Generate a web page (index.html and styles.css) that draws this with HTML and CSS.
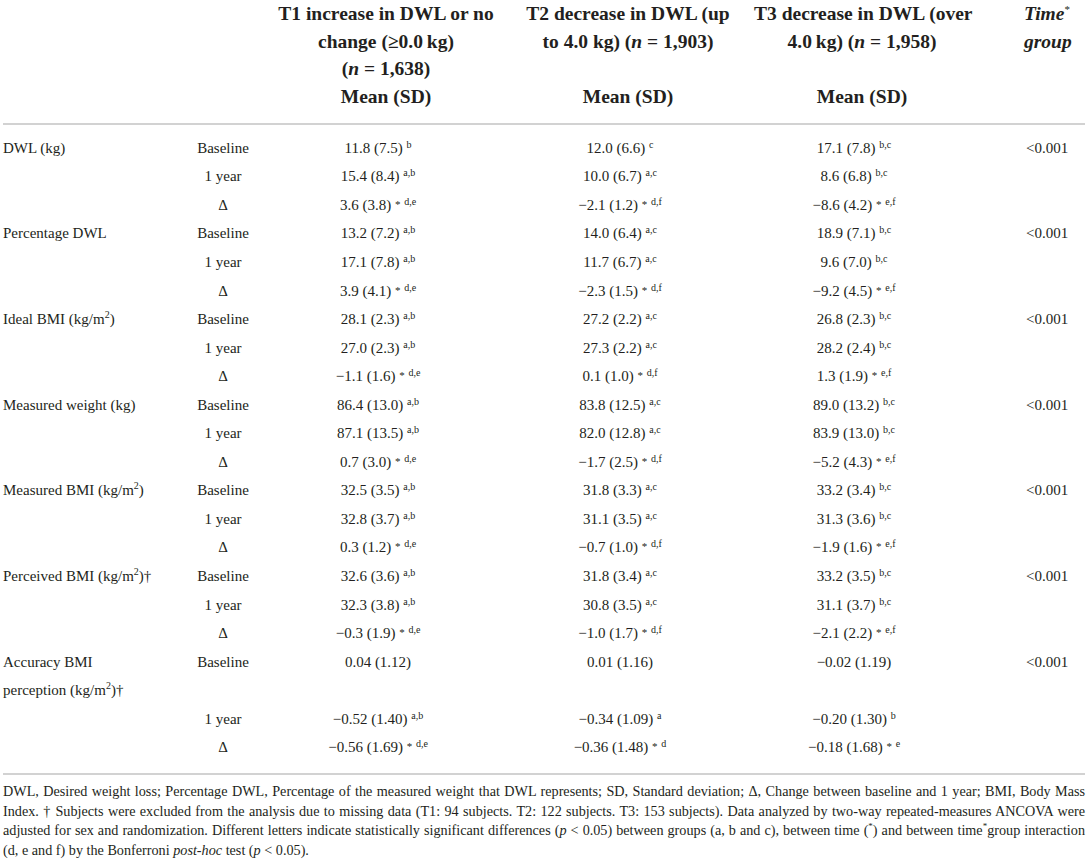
FILE: index.html
```html
<!DOCTYPE html>
<html lang="en">
<head>
<meta charset="utf-8">
<title>Table</title>
<link rel="stylesheet" href="styles.css">
</head>
<body>
<table class="data">
  <colgroup>
    <col class="c-label"><col class="c-time"><col class="c-t1"><col class="c-t2"><col class="c-t3"><col class="c-tg">
  </colgroup>
  <thead>
    <tr class="hrow1">
      <th></th>
      <th></th>
      <th class="hg">T1 increase in DWL or no<br>change (≥0.0&#8201;kg)<br>(<i>n</i> = 1,638)</th>
      <th class="hg">T2 decrease in DWL (up<br>to 4.0 kg) (<i>n</i> = 1,903)</th>
      <th class="hg">T3 decrease in DWL (over<br>4.0&#8201;kg) (<i>n</i> = 1,958)</th>
      <th class="htg" rowspan="2"><i>Time</i><sup class="hstar">*</sup><br><i>group</i></th>
    </tr>
    <tr class="hrow2">
      <th></th>
      <th></th>
      <th class="hg">Mean (SD)</th>
      <th class="hg">Mean (SD)</th>
      <th class="hg">Mean (SD)</th>
    </tr>
  </thead>
  <tbody>
    <tr><td class="lab">DWL (kg)</td><td class="tm">Baseline</td><td class="v">11.8 (7.5) <sup>b</sup></td><td class="v">12.0 (6.6) <sup>c</sup></td><td class="v">17.1 (7.8) <sup>b,c</sup></td><td class="p">&lt;0.001</td></tr>
    <tr><td class="lab"></td><td class="tm">1 year</td><td class="v">15.4 (8.4) <sup>a,b</sup></td><td class="v">10.0 (6.7) <sup>a,c</sup></td><td class="v">8.6 (6.8) <sup>b,c</sup></td><td class="p"></td></tr>
    <tr><td class="lab"></td><td class="tm">Δ</td><td class="v">3.6 (3.8) <span class="st">*</span> <sup>d,e</sup></td><td class="v">−2.1 (1.2) <span class="st">*</span> <sup>d,f</sup></td><td class="v">−8.6 (4.2) <span class="st">*</span> <sup>e,f</sup></td><td class="p"></td></tr>

    <tr><td class="lab">Percentage DWL</td><td class="tm">Baseline</td><td class="v">13.2 (7.2) <sup>a,b</sup></td><td class="v">14.0 (6.4) <sup>a,c</sup></td><td class="v">18.9 (7.1) <sup>b,c</sup></td><td class="p">&lt;0.001</td></tr>
    <tr><td class="lab"></td><td class="tm">1 year</td><td class="v">17.1 (7.8) <sup>a,b</sup></td><td class="v">11.7 (6.7) <sup>a,c</sup></td><td class="v">9.6 (7.0) <sup>b,c</sup></td><td class="p"></td></tr>
    <tr><td class="lab"></td><td class="tm">Δ</td><td class="v">3.9 (4.1) <span class="st">*</span> <sup>d,e</sup></td><td class="v">−2.3 (1.5) <span class="st">*</span> <sup>d,f</sup></td><td class="v">−9.2 (4.5) <span class="st">*</span> <sup>e,f</sup></td><td class="p"></td></tr>

    <tr><td class="lab">Ideal BMI (kg/m<sup class="u">2</sup>)</td><td class="tm">Baseline</td><td class="v">28.1 (2.3) <sup>a,b</sup></td><td class="v">27.2 (2.2) <sup>a,c</sup></td><td class="v">26.8 (2.3) <sup>b,c</sup></td><td class="p">&lt;0.001</td></tr>
    <tr><td class="lab"></td><td class="tm">1 year</td><td class="v">27.0 (2.3) <sup>a,b</sup></td><td class="v">27.3 (2.2) <sup>a,c</sup></td><td class="v">28.2 (2.4) <sup>b,c</sup></td><td class="p"></td></tr>
    <tr><td class="lab"></td><td class="tm">Δ</td><td class="v">−1.1 (1.6) <span class="st">*</span> <sup>d,e</sup></td><td class="v">0.1 (1.0) <span class="st">*</span> <sup>d,f</sup></td><td class="v">1.3 (1.9) <span class="st">*</span> <sup>e,f</sup></td><td class="p"></td></tr>

    <tr><td class="lab">Measured weight (kg)</td><td class="tm">Baseline</td><td class="v">86.4 (13.0) <sup>a,b</sup></td><td class="v">83.8 (12.5) <sup>a,c</sup></td><td class="v">89.0 (13.2) <sup>b,c</sup></td><td class="p">&lt;0.001</td></tr>
    <tr><td class="lab"></td><td class="tm">1 year</td><td class="v">87.1 (13.5) <sup>a,b</sup></td><td class="v">82.0 (12.8) <sup>a,c</sup></td><td class="v">83.9 (13.0) <sup>b,c</sup></td><td class="p"></td></tr>
    <tr><td class="lab"></td><td class="tm">Δ</td><td class="v">0.7 (3.0) <span class="st">*</span> <sup>d,e</sup></td><td class="v">−1.7 (2.5) <span class="st">*</span> <sup>d,f</sup></td><td class="v">−5.2 (4.3) <span class="st">*</span> <sup>e,f</sup></td><td class="p"></td></tr>

    <tr><td class="lab">Measured BMI (kg/m<sup class="u">2</sup>)</td><td class="tm">Baseline</td><td class="v">32.5 (3.5) <sup>a,b</sup></td><td class="v">31.8 (3.3) <sup>a,c</sup></td><td class="v">33.2 (3.4) <sup>b,c</sup></td><td class="p">&lt;0.001</td></tr>
    <tr><td class="lab"></td><td class="tm">1 year</td><td class="v">32.8 (3.7) <sup>a,b</sup></td><td class="v">31.1 (3.5) <sup>a,c</sup></td><td class="v">31.3 (3.6) <sup>b,c</sup></td><td class="p"></td></tr>
    <tr><td class="lab"></td><td class="tm">Δ</td><td class="v">0.3 (1.2) <span class="st">*</span> <sup>d,e</sup></td><td class="v">−0.7 (1.0) <span class="st">*</span> <sup>d,f</sup></td><td class="v">−1.9 (1.6) <span class="st">*</span> <sup>e,f</sup></td><td class="p"></td></tr>

    <tr><td class="lab">Perceived BMI (kg/m<sup class="u">2</sup>)†</td><td class="tm">Baseline</td><td class="v">32.6 (3.6) <sup>a,b</sup></td><td class="v">31.8 (3.4) <sup>a,c</sup></td><td class="v">33.2 (3.5) <sup>b,c</sup></td><td class="p">&lt;0.001</td></tr>
    <tr><td class="lab"></td><td class="tm">1 year</td><td class="v">32.3 (3.8) <sup>a,b</sup></td><td class="v">30.8 (3.5) <sup>a,c</sup></td><td class="v">31.1 (3.7) <sup>b,c</sup></td><td class="p"></td></tr>
    <tr><td class="lab"></td><td class="tm">Δ</td><td class="v">−0.3 (1.9) <span class="st">*</span> <sup>d,e</sup></td><td class="v">−1.0 (1.7) <span class="st">*</span> <sup>d,f</sup></td><td class="v">−2.1 (2.2) <span class="st">*</span> <sup>e,f</sup></td><td class="p"></td></tr>

    <tr><td class="lab">Accuracy BMI<br>perception (kg/m<sup class="u">2</sup>)†</td><td class="tm">Baseline</td><td class="v">0.04 (1.12)</td><td class="v">0.01 (1.16)</td><td class="v">−0.02 (1.19)</td><td class="p">&lt;0.001</td></tr>
    <tr><td class="lab"></td><td class="tm">1 year</td><td class="v">−0.52 (1.40) <sup>a,b</sup></td><td class="v">−0.34 (1.09) <sup>a</sup></td><td class="v">−0.20 (1.30) <sup>b</sup></td><td class="p"></td></tr>
    <tr><td class="lab"></td><td class="tm">Δ</td><td class="v">−0.56 (1.69) <span class="st">*</span> <sup>d,e</sup></td><td class="v">−0.36 (1.48) <span class="st">*</span> <sup>d</sup></td><td class="v">−0.18 (1.68) <span class="st">*</span> <sup>e</sup></td><td class="p"></td></tr>
  </tbody>
</table>
<p class="note">DWL, Desired weight loss; Percentage DWL, Percentage of the measured weight that DWL represents; SD, Standard deviation; Δ, Change between baseline and 1 year; BMI, Body Mass Index. † Subjects were excluded from the analysis due to missing data (T1: 94 subjects. T2: 122 subjects. T3: 153 subjects). Data analyzed by two-way repeated-measures ANCOVA were adjusted for sex and randomization. Different letters indicate statistically significant differences (<i>p</i> &lt; 0.05) between groups (a, b and c), between time (<sup class="nst">*</sup>) and between time<sup class="nst">*</sup>group interaction (d, e and f) by the Bonferroni <i>post-hoc</i> test (<i>p</i> &lt; 0.05).</p>
</body>
</html>
```

FILE: styles.css
```css
html, body {
  background: #ffffff;
}
body {
  margin: 0;
  padding: 0 4px 0 3px;
  font-family: "Liberation Serif", "Times New Roman", serif;
  color: #231f20;
}
.data {
  width: 100%;
  border-collapse: collapse;
  table-layout: fixed;
}
.c-label { width: 157px; }
.c-time { width: 110px; }
.c-t1 { width: 232px; }
.c-t2 { width: 252px; }
.c-t3 { width: 216px; }
.c-tg { width: auto; }

.data th, .data td {
  padding: 0;
}
.data thead {
  border-bottom: 2px solid #d2d2d2;
}
.data thead th {
  font-size: 19.5px;
  font-weight: bold;
  line-height: 27.7px;
  text-align: center;
  vertical-align: top;
  white-space: nowrap;
}
.hrow2 th {
  padding-bottom: 12px;
}
.data thead th.htg {
  text-align: left;
  padding-left: 54px;
}
.hstar {
  font-size: 11px;
  font-weight: normal;
  vertical-align: baseline;
  position: relative;
  top: -7px;
  line-height: 0;
}
.data tbody td {
  font-size: 15px;
  line-height: 28.55px;
  vertical-align: top;
  text-align: center;
  white-space: nowrap;
}
.data tbody tr:first-child td {
  padding-top: 9px;
}
.data tbody tr:last-child td {
  padding-bottom: 11px;
}
.data tbody {
  border-bottom: 2px solid #d2d2d2;
}
.data tbody td.lab {
  text-align: left;
}
.data tbody td.tm {
  padding-left: 16px;
}
.data tbody td.v {
  padding-right: 16px;
}
.data tbody td.p {
  text-align: left;
  padding-left: 56px;
}
sup {
  font-size: 10px;
  line-height: 0;
  vertical-align: baseline;
  position: relative;
  top: -5px;
}
sup.u {
  font-size: 10px;
  top: -6px;
}
.st {
  font-size: 11px;
  line-height: 0;
  position: relative;
  top: -2px;
}
.note {
  margin: 7px 0 0 0;
  font-size: 14.2px;
  line-height: 19.7px;
  text-align: justify;
}
.nst {
  font-size: 9px;
  top: -6px;
}
```
